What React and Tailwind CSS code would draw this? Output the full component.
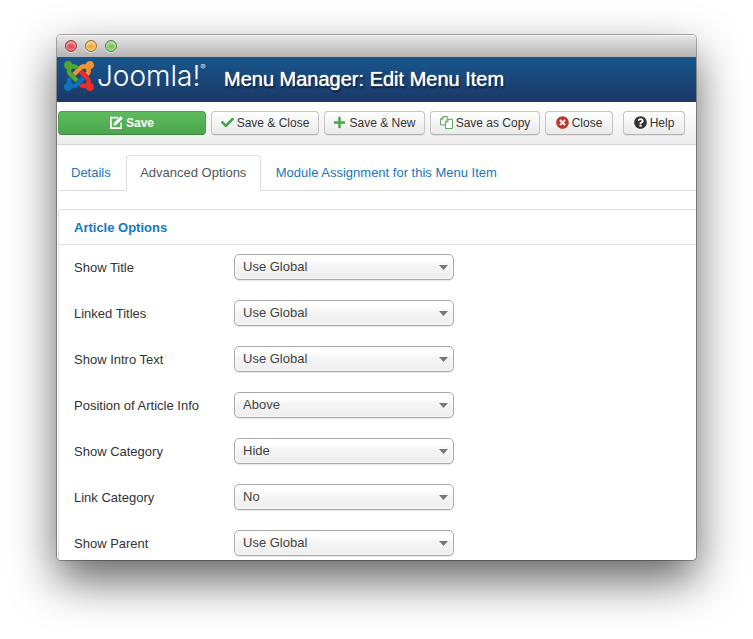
import { FaCheck, FaPlus, FaTimesCircle, FaQuestionCircle } from "react-icons/fa";

const options = [
  { id: "show-title", label: "Show Title", value: "Use Global" },
  { id: "linked-titles", label: "Linked Titles", value: "Use Global" },
  { id: "show-intro", label: "Show Intro Text", value: "Use Global" },
  { id: "info-position", label: "Position of Article Info", value: "Above" },
  { id: "show-category", label: "Show Category", value: "Hide" },
  { id: "link-category", label: "Link Category", value: "No" },
  { id: "show-parent", label: "Show Parent", value: "Use Global" },
];

function JoomlaMark() {
  return (
    <svg viewBox="0 32 448 448" className="h-[30px] w-[30px] shrink-0" strokeWidth="6" aria-hidden="true">
      <path fill="#4fa82f" stroke="#4fa82f" d="M.6 92.1C.6 58.8 27.4 32 60.4 32c30 0 54.5 21.9 59.2 50.2 32.6-7.6 67.1.6 96.5 30l-44.3 44.3c-20.5-20.5-42.6-16.3-55.4-3.5-14.3 14.3-14.3 37.9 0 52.2l99.5 99.5-44 44.3c-87.7-87.2-49.7-49.7-99.8-99.7-26.8-26.5-35-64.8-24.8-98.9C20.4 144.6.6 120.7.6 92.1z" />
      <path fill="#f59332" stroke="#f59332" d="M130.1 208.5l44.3 44.3c10-10 89.7-89.7 99.7-99.8 14.3-14.3 37.6-14.3 51.9 0 12.8 12.8 17 35-3.5 55.4l44 44.3c31.2-31.2 38.5-67.6 28.9-101.2 29.2-4.1 51.9-29.2 51.9-59.5 0-33.2-26.8-60.1-59.8-60.1-30.3 0-55.4 22.5-59.5 51.6-33.8-9.9-71.7-1.5-98.3 25.1-18.3 19.1-71.1 71.5-99.6 99.9z" />
      <path fill="#ee2c2a" stroke="#ee2c2a" d="M396.4 360.7c8.2-32.7-.9-68.5-26.3-93.9-11.8-12.2 5 4.7-99.5-99.7l-44.3 44.3 99.7 99.7c14.3 14.3 14.3 37.6 0 51.9-12.8 12.8-35 17-55.4-3.5l-44 44.3c27.6 30.2 68 38.8 102.7 28 5.5 27.4 29.7 48.1 58.9 48.1 33 0 59.8-26.8 59.8-60.1 0-30.2-22.5-55-51.6-59.1z" />
      <path fill="#1171ba" stroke="#1171ba" d="M312.1 307.6l-44-44.3c-87 86.4-50.4 50.4-99.7 99.8-14.3 14.3-37.6 14.3-51.9 0-13.1-13.4-16.9-35.3 3.2-55.4l-44-44.3c-30.2 30.2-38 65.2-29.5 98.3-26.7 6-46.2 29.9-46.2 58.2C0 453.2 26.8 480 59.8 480c28.6 0 52.5-19.8 58.6-46.7 32.7 8.2 68.5-.6 94.2-26 32.1-32 12.2-12.4 99.5-99.7z" />
    </svg>
  );
}

function EditIcon() {
  return (
    <svg viewBox="0 0 14 14" className="h-[13px] w-[13px]" aria-hidden="true">
      <path d="M8.5 1.8H1v11.2h11V7.2" fill="none" stroke="currentColor" strokeWidth="1.8" />
      <path d="M3.6 10.4l.7-3.2L10.8.7a.9.9 0 0 1 1.3 0l1.2 1.2a.9.9 0 0 1 0 1.3L6.8 9.7z" fill="currentColor" />
    </svg>
  );
}

function CopyIcon() {
  return (
    <svg viewBox="0 0 14 14" className="h-[13px] w-[13px] text-[#4f9c55]" fill="#fff" stroke="currentColor" aria-hidden="true">
      <path d="M.6 3.4L3.4.6h4.4v9H.6z" />
      <path d="M3.4.6v2.8H.6" fill="none" />
      <path d="M5.8 6.4l2.8-2.8h4.8v9.8H5.8z" />
      <path d="M8.6 3.6v2.8H5.8" fill="none" />
    </svg>
  );
}

function ToolButton({ icon, width, children }) {
  return (
    <button
      type="button"
      className={`flex h-6 shrink-0 items-center justify-center gap-[3px] whitespace-nowrap rounded-[4px] border border-[#c6c6c6] border-b-[#b3b3b3] bg-linear-to-b from-white to-[#eaeaea] text-[12px] text-[#333] shadow-[0_1px_1px_rgba(0,0,0,0.06)] ${width}`}
    >
      <span className="pb-[2px] text-[13px]">{icon}</span>
      {children}
    </button>
  );
}

function Light({ tone }) {
  return (
    <span className={`h-3 w-3 rounded-full border shadow-[inset_0_3px_2px_rgba(255,255,255,0.45),inset_0_-2px_2px_rgba(255,255,255,0.35),0_1px_0_rgba(255,255,255,0.5)] ${tone}`} />
  );
}

function OptionRow({ id, label, value }) {
  return (
    <div className="flex h-[26px] items-center">
      <label htmlFor={id} className="w-40 shrink-0 pt-[2px]">{label}</label>
      <div className="relative w-[220px]">
        <select
          id={id}
          defaultValue={value}
          className="block h-[26px] w-full appearance-none rounded-[5px] border border-[#aaa] bg-linear-to-b from-white from-20% via-[#f4f4f4] via-50% to-[#eee] pr-6 pb-px pl-2 text-[13px] text-[#444] shadow-[inset_0_0_3px_white,0_1px_1px_rgba(0,0,0,0.1)]"
        >
          <option>{value}</option>
        </select>
        <svg viewBox="0 0 9 5" className="pointer-events-none absolute top-[11px] right-[6px] h-[5px] w-[9px]" aria-hidden="true">
          <path d="M0 0h9L4.500 5z" fill="#777" />
        </svg>
      </div>
    </div>
  );
}

export default function App() {
  return (
    <div className="min-h-screen bg-white px-[57px] pt-[35px] pb-[79px] font-['Liberation_Sans',Arial,sans-serif] text-[13px] leading-[18px] text-[#333]">
      <div className="overflow-hidden rounded-[4px] bg-white shadow-[0_0_0_1px_rgba(0,0,0,0.3),0_20px_46px_rgba(0,0,0,0.62)]">
        <div className="flex h-[22px] items-center gap-2 border-t border-[#f4f4f4] bg-linear-to-b from-[#e6e6e6] to-[#b4b4b4] px-2 pb-px">
          <Light tone="border-[#8f4145] bg-[#e8444c]" />
          <Light tone="border-[#94703a] bg-[#f0ac3c]" />
          <Light tone="border-[#557f44] bg-[#7cc45c]" />
        </div>

        <header className="flex h-[45px] items-center bg-linear-to-b from-[#17568c] to-[#1a3867] px-[7px] pb-[7px] text-white">
          <JoomlaMark />
          <span className="ml-[3px] flex w-[127px] items-start font-['Inter',sans-serif] text-[28px] leading-[30px] font-light">
            Joomla!
            <span className="text-[8px] leading-3">®</span>
          </span>
          <h1 className="pt-[6px] text-[20px] leading-7 font-normal whitespace-nowrap [text-shadow:0_0_1px_white,1px_2px_2px_rgba(0,0,0,0.7)]">
            Menu Manager: Edit Menu Item
          </h1>
        </header>

        <div className="flex h-[43px] items-start gap-[5px] border-b border-[#d3d3d3] bg-linear-to-b from-white to-[#ededed] px-px pt-[9px]">
          <button
            type="button"
            className="flex h-6 w-[148px] shrink-0 items-center justify-center gap-[3px] rounded-[4px] border border-[#4b9f4b] border-b-[#3d863d] bg-linear-to-b from-[#5dbb5d] to-[#4ca64c] text-[12px] font-bold text-white"
          >
            <span className="pb-[2px]"><EditIcon /></span>
            Save
          </button>
          <ToolButton width="w-[108px]" icon={<FaCheck className="text-[#46a546]" />}>Save &amp; Close</ToolButton>
          <ToolButton width="w-[101px]" icon={<FaPlus className="text-[#46a546]" />}>Save &amp; New</ToolButton>
          <ToolButton width="w-[110px]" icon={<CopyIcon />}>Save as Copy</ToolButton>
          <ToolButton width="w-[68px]" icon={<FaTimesCircle className="text-[#bd362f]" />}>Close</ToolButton>
          <div className="pl-[5px]">
            <ToolButton width="w-[62px]" icon={<FaQuestionCircle className="text-[#333]" />}>Help</ToolButton>
          </div>
        </div>

        <nav className="ml-px flex border-b border-[#ddd] pt-[10px]">
          <a href="#details" className="mb-px pt-[9px] pr-[15px] pb-[7px] pl-[13px] text-[#1a75bb]">Details</a>
          <a href="#advanced" className="-mb-px w-[135px] rounded-t-[4px] border border-[#ddd] border-b-white bg-white pt-[8px] pb-[7px] text-center whitespace-nowrap text-[#555]">
            Advanced Options
          </a>
          <a href="#modules" className="mb-px px-[15px] pt-[9px] pb-[7px] whitespace-nowrap text-[#1a75bb]">Module Assignment for this Menu Item</a>
        </nav>

        <section className="mt-[18px] ml-px rounded-tl-[4px] border-t border-l border-[#e0e0e0]">
          <h2 className="border-b border-[#e0e0e0] px-[15px] pt-[9px] pb-[7px] font-bold text-[#1778bd]">
            <a href="#article-options">Article Options</a>
          </h2>
          <form className="flex flex-col gap-5 px-[15px] pt-[9px] pb-[4px]">
            {options.map((o) => (
              <OptionRow key={o.id} {...o} />
            ))}
          </form>
        </section>
      </div>
    </div>
  );
}
